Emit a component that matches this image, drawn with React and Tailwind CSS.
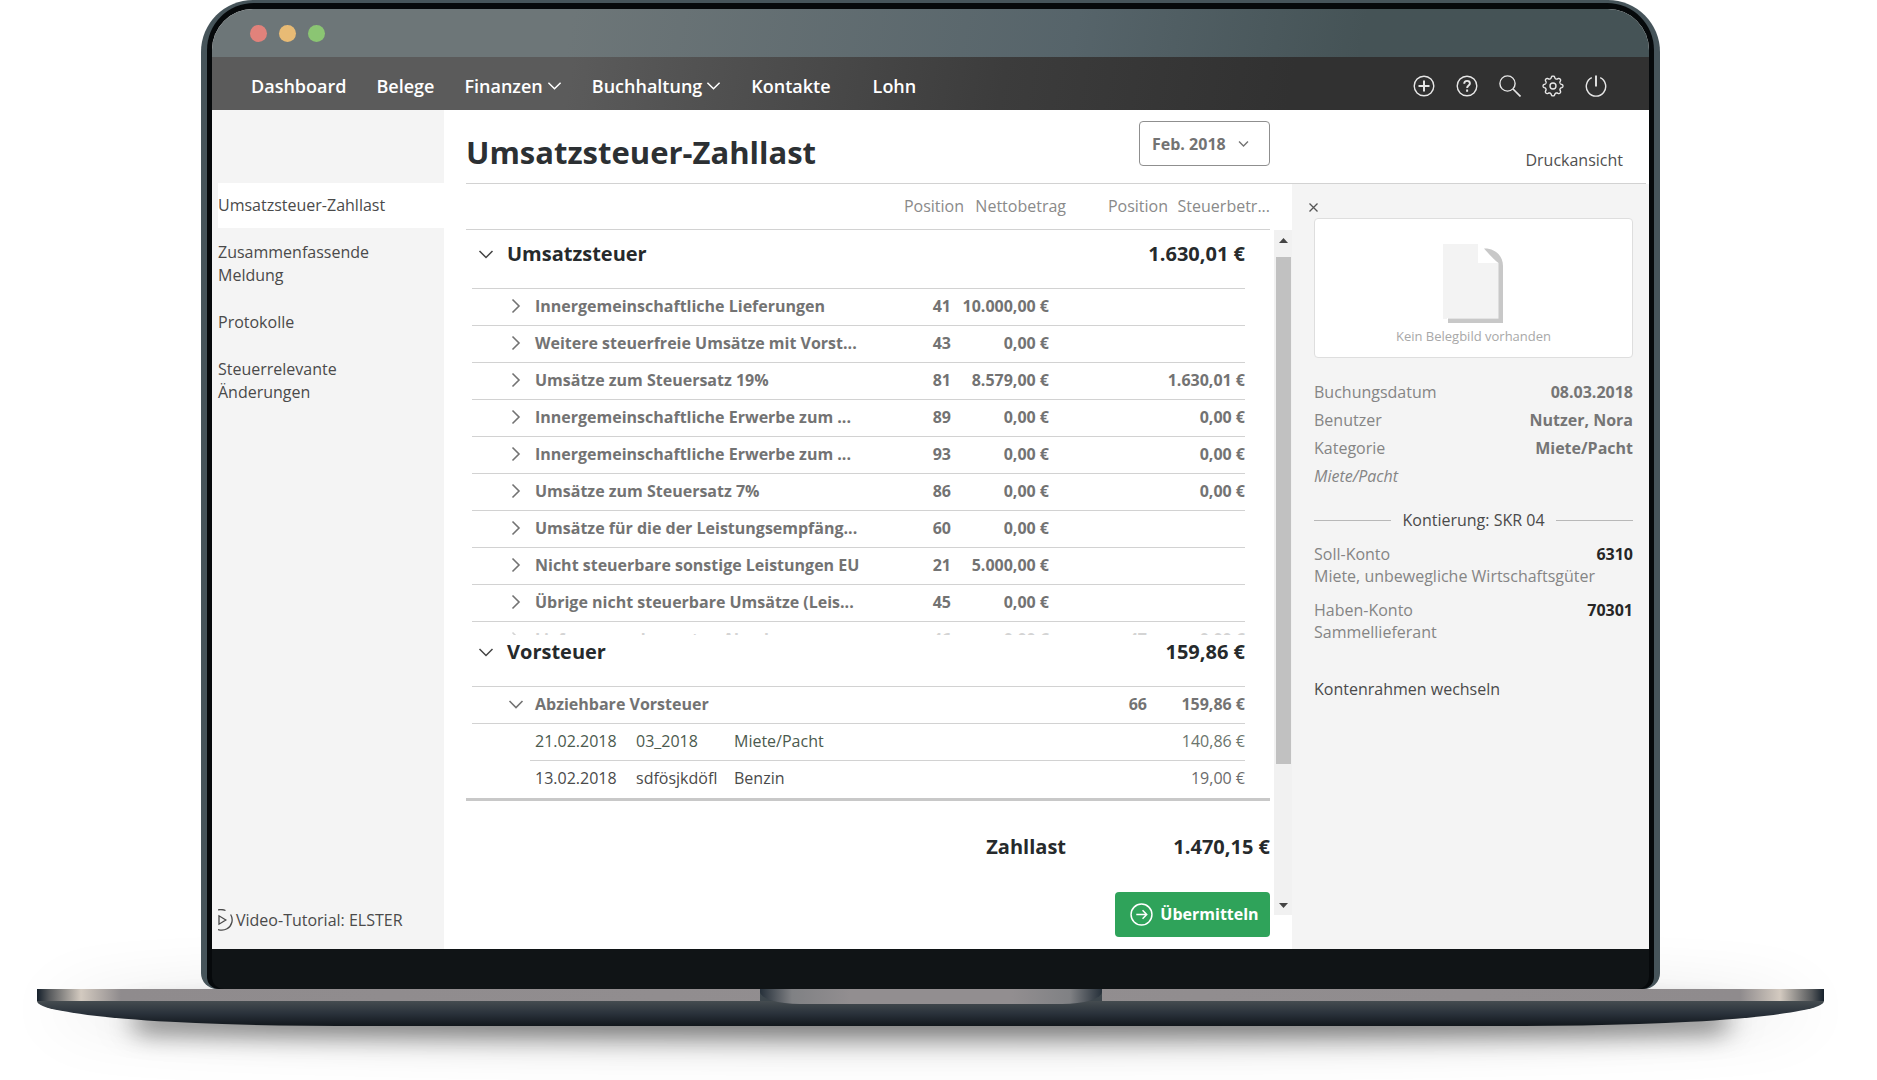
import React from 'react';

const CHEVRONS = {
  down: 'M1.5 5l6.5 6.5L14.5 5',
  right: 'M4.5 1.5L11 8l-6.500 6.500',
};

function Chevron({ dir = 'down', className = '', stroke = 1.5 }) {
  return (
    <svg viewBox="0 0 16 16" className={className} fill="none" stroke="currentColor" strokeWidth={stroke} aria-hidden="true">
      <path d={CHEVRONS[dir]} />
    </svg>
  );
}

/* Outline of the eight-lobed gear, as a closed wave round the centre. */
const GEAR = (() => {
  const points = [];
  for (let i = 0; i < 160; i += 1) {
    const a = (i / 160) * Math.PI * 2;
    const wave = Math.tanh(1.6 * Math.cos(8 * a));
    const r = 8.8 + 1.2 * wave;
    points.push(`${(11 + r * Math.sin(a)).toFixed(2)} ${(11 - r * Math.cos(a)).toFixed(2)}`);
  }
  return `M${points.join('L')}Z`;
})();

function NavIcon({ label, children }) {
  return (
    <button type="button" aria-label={label} className="size-[22px] text-[#e6e6e6]">
      <svg viewBox="0 0 22 22" className="size-full" fill="none" stroke="currentColor" strokeWidth="1.4">
        {children}
      </svg>
    </button>
  );
}

function NavLink({ children, menu, className = '' }) {
  return (
    <a href="#" className={`flex items-center gap-1 ${className}`}>
      {children}
      {menu && <Chevron className="size-[15px]" stroke={1.6} />}
    </a>
  );
}

function TitleBar() {
  return (
    <div className="flex h-12 items-center gap-3 bg-linear-100 from-[#6d7678] from-25% via-[#56646a] via-60% to-[#455356] to-80% pl-[38px]">
      <span className="size-[17px] rounded-full bg-[#e1827b]" />
      <span className="size-[17px] rounded-full bg-[#e8bb75]" />
      <span className="size-[17px] rounded-full bg-[#8bc573]" />
    </div>
  );
}

function NavBar() {
  return (
    <header className="flex h-[53px] items-center justify-between bg-linear-100 from-[#5b5b5b] from-25% via-[#3c3c3c] via-55% to-[#313131] to-75% pt-1 pr-[42px] pl-[39px] text-lg font-semibold text-white">
      <nav className="flex items-center gap-[30px]">
        <NavLink>Dashboard</NavLink>
        <NavLink>Belege</NavLink>
        <NavLink menu>Finanzen</NavLink>
        <NavLink menu>Buchhaltung</NavLink>
        <NavLink>Kontakte</NavLink>
        <NavLink className="ml-3">Lohn</NavLink>
      </nav>
      <div className="flex items-center gap-[21px]">
        <NavIcon label="Neu">
          <circle cx="11" cy="11" r="9.8" />
          <path d="M11 5.500v11M5.500 11h11" strokeWidth="2" />
        </NavIcon>
        <NavIcon label="Hilfe">
          <circle cx="11" cy="11" r="9.800" />
          <path d="M8.200 8.800c0-1.800 1.200-2.900 2.900-2.900s2.800 1 2.800 2.500c0 2-2.800 2.200-2.800 4.500" strokeWidth="1.900" />
          <path d="M11.100 14.600v2.100" strokeWidth="2" />
        </NavIcon>
        <NavIcon label="Suche">
          <circle cx="8.500" cy="8.500" r="7.600" />
          <path d="M14 14l7.500 7.500" strokeWidth="1.700" />
        </NavIcon>
        <NavIcon label="Einstellungen">
          <path d={GEAR} />
          <circle cx="11" cy="11" r="3" />
        </NavIcon>
        <NavIcon label="Abmelden">
          <path d="M6.800 2.700a9.700 9.700 0 1 0 8.400 0" />
          <path d="M11 .5v11" strokeWidth="1.900" />
        </NavIcon>
      </div>
    </header>
  );
}

function Sidebar() {
  const item = 'block py-3 pr-14';
  return (
    <aside className="flex w-[232px] shrink-0 flex-col justify-between bg-[#f4f4f4] pt-[73px] pb-[17px] pl-[6px] leading-[23px] text-[#4a4a4a]">
      <nav>
        <a href="#" aria-current="page" className="block bg-white py-[11px]">Umsatzsteuer-Zahllast</a>
        <a href="#" className="block pt-[13px] pr-14 pb-3">Zusammenfassende Meldung</a>
        <a href="#" className={item}>Protokolle</a>
        <a href="#" className={item}>Steuerrelevante Änderungen</a>
      </nav>
      <a href="#" className="flex items-center gap-[3px]">
        <svg viewBox="0 0 15 22" className="h-[22px] w-[15px]" fill="none" stroke="currentColor" strokeWidth="1.3" aria-hidden="true">
          <path d="M0 .9C2.500.300 5 .500 7.500 1.500M12.600 5.500C15.800 10.500 13.800 17 9 19.800 6 21.500 3 21.500 0 20.500" />
          <path d="M1 6.800v8.400l6.800-4.200z" />
        </svg>
        Video-Tutorial: ELSTER
      </a>
    </aside>
  );
}

function Columns() {
  return (
    <colgroup>
      <col className="w-[58px]" />
      <col />
      <col className="w-[98px]" />
      <col className="w-[98px]" />
      <col className="w-[98px]" />
      <col className="w-[98px]" />
    </colgroup>
  );
}

const SALES = [
  ['Innergemeinschaftliche Lieferungen', '41', '10.000,00 €', '', ''],
  ['Weitere steuerfreie Umsätze mit Vorst...', '43', '0,00 €', '', ''],
  ['Umsätze zum Steuersatz 19%', '81', '8.579,00 €', '', '1.630,01 €'],
  ['Innergemeinschaftliche Erwerbe zum ...', '89', '0,00 €', '', '0,00 €'],
  ['Innergemeinschaftliche Erwerbe zum ...', '93', '0,00 €', '', '0,00 €'],
  ['Umsätze zum Steuersatz 7%', '86', '0,00 €', '', '0,00 €'],
  ['Umsätze für die der Leistungsempfäng...', '60', '0,00 €', '', ''],
  ['Nicht steuerbare sonstige Leistungen EU', '21', '5.000,00 €', '', ''],
  ['Übrige nicht steuerbare Umsätze (Leis...', '45', '0,00 €', '', ''],
  ['Lieferungen des ersten Abnehmers', '46', '0,00 €', '47', '0,00 €'],
];

const RECEIPTS = [
  ['21.02.2018', '03_2018', 'Miete/Pacht', '140,86 €', 'text-[#4b5a4e]'],
  ['13.02.2018', 'sdfösjkdöfl', 'Benzin', '19,00 €', 'text-[#4a4a4a]'],
];

function SectionHeading({ title, amount, className }) {
  return (
    <div className={`flex justify-between border-b border-[#d2d2d2] pl-[6px] text-xl leading-7 font-bold text-[#262a2c] ${className}`}>
      <h2>
        <button type="button" aria-expanded="true" className="flex items-center gap-[13px]">
          <Chevron className="size-4 text-[#444]" />
          {title}
        </button>
      </h2>
      <span>{amount}</span>
    </div>
  );
}

function GroupRow({ row, open, faded }) {
  const [name, ...values] = row;
  return (
    <tr className={`h-[37px] border-b border-[#d2d2d2] font-bold ${faded ? 'text-[#d4d4d4]' : 'text-[#737373]'}`}>
      <td className="pb-[2px] pl-9 align-middle">
        <button type="button" aria-label={name} aria-expanded={!!open} className="flex">
          <Chevron dir={open ? 'down' : 'right'} className="size-4" stroke={1.6} />
        </button>
      </td>
      <td className="pb-[2px] pl-[5px] whitespace-nowrap">{name}</td>
      {values.map((v, i) => (
        <td key={i} className="pb-[2px] text-right whitespace-nowrap">{v}</td>
      ))}
    </tr>
  );
}

function Report() {
  return (
    <section className="min-w-0 flex-1 pb-3 pl-[22px]">
      <table className="w-full table-fixed border-b border-[#d2d2d2] text-right text-[#8a8a8a]">
        <colgroup>
          <col />
          <col className="w-[102px]" />
          <col className="w-[102px]" />
          <col className="w-[102px]" />
          <col className="w-[102px]" />
        </colgroup>
        <thead>
          <tr className="h-[45px]">
            <td />
            <th className="font-normal">Position</th>
            <th className="font-normal">Nettobetrag</th>
            <th className="font-normal">Position</th>
            <th className="font-normal whitespace-nowrap">Steuerbetr...</th>
          </tr>
        </thead>
      </table>

      <div className="h-[405px] overflow-hidden pr-[25px] pl-[6px]">
        <SectionHeading title="Umsatzsteuer" amount="1.630,01 €" className="pt-[10px] pb-5" />
        <table className="w-full table-fixed">
          <Columns />
          <tbody>
            {SALES.map((row, i) => <GroupRow key={row[1]} row={row} faded={i === SALES.length - 1} />)}
          </tbody>
        </table>
      </div>

      <div className="pr-[25px] pl-[6px]">
        <SectionHeading title="Vorsteuer" amount="159,86 €" className="pt-[3px] pb-5" />
        <table className="w-full table-fixed">
          <Columns />
          <tbody>
            <GroupRow open row={['Abziehbare Vorsteuer', '', '', '66', '159,86 €']} />
            {RECEIPTS.map(([date, number, category, amount, tone], i) => (
              <tr key={date} className={`h-[37px] ${tone}`}>
                <td />
                <td colSpan={4} className={i === 0 ? 'border-b border-[#d2d2d2] pb-[2px] pl-[5px]' : 'pb-[2px] pl-[5px]'}>
                  <div className="flex">
                    <span className="w-[101px]">{date}</span>
                    <span className="w-[98px]">{number}</span>
                    <span>{category}</span>
                  </div>
                </td>
                <td className={i === 0 ? 'border-b border-[#d2d2d2] pb-[2px] text-right text-[#6b756d]' : 'pb-[2px] text-right text-[#6b6b6b]'}>{amount}</td>
              </tr>
            ))}
          </tbody>
        </table>
      </div>

      <div className="grid grid-cols-[1fr_204px] border-t-3 border-[#c8c8c8] pt-8 text-right text-xl leading-7 font-bold text-[#262a2c]">
        <span>Zahllast</span>
        <span>1.470,15 €</span>
      </div>
      <div className="mt-[31px] flex justify-end">
        <button type="button" className="flex h-[45px] w-[155px] items-center justify-center gap-[7px] rounded-[4px] bg-[#2fa35a] pl-1 font-bold text-white">
          <svg viewBox="0 0 22 22" className="size-[23px]" fill="none" stroke="currentColor" strokeWidth="1.400" aria-hidden="true">
            <circle cx="11" cy="11" r="10" />
            <path d="M6 11h10M12 7l4 4-4 4" />
          </svg>
          Übermitteln
        </button>
      </div>
    </section>
  );
}

function ScrollTrack() {
  return (
    <div className="ml-1 flex w-[18px] shrink-0 flex-col pt-[46px] pb-[34px]" aria-hidden="true">
      <div className="flex flex-1 flex-col items-center bg-[#f1f1f1]">
        <svg viewBox="0 0 9 5" className="mt-2 mb-[14px] h-[5px] w-[9px] shrink-0 fill-[#444]"><path d="M0 5L4.500 0 9 5z" /></svg>
        <div className="h-[74%] w-[15px] bg-[#c1c1c1]" />
        <svg viewBox="0 0 9 5" className="mt-auto mb-[7px] h-[5px] w-[9px] shrink-0 fill-[#444]"><path d="M0 0h9L4.500 5z" /></svg>
      </div>
    </div>
  );
}

function Account({ label, number, text, className }) {
  return (
    <div className={`leading-[22px] ${className}`}>
      <div className="flex justify-between">
        <span>{label}</span>
        <span className="font-bold text-[#262626]">{number}</span>
      </div>
      <p>{text}</p>
    </div>
  );
}

function Details() {
  const facts = [
    ['Buchungsdatum', '08.03.2018'],
    ['Benutzer', 'Nutzer, Nora'],
    ['Kategorie', 'Miete/Pacht'],
  ];
  return (
    <aside className="w-[357px] shrink-0 bg-[#f4f4f4] pt-[18px] pr-4 pl-[22px] text-[#858585]">
      <button type="button" aria-label="Schließen" className="-ml-[6px] flex size-[11px] text-[#555]">
        <svg viewBox="0 0 11 11" className="size-full" fill="none" stroke="currentColor" strokeWidth="1.300"><path d="M1.500 1.500l8 8M9.500 1.500l-8 8" /></svg>
      </button>
      <figure className="mt-[5px] flex h-[140px] flex-col items-center rounded-[4px] border border-[#dedede] bg-white pt-[25px]">
        <svg viewBox="0 0 62 79" className="h-[79px] w-[62px]" aria-hidden="true">
          <path d="M0 0h35v19h21v55H4v1H0z" fill="#f3f3f3" />
          <path d="M41 4.500C50 4 60 10 60 22v57H5v-4.500h50.500V19C51 16 45 9 41 4.500z" fill="#c8c8c8" />
        </svg>
        <figcaption className="mt-[3px] text-[13px] leading-5 text-[#a8a8a8]">Kein Belegbild vorhanden</figcaption>
      </figure>
      <dl className="mt-5 leading-7">
        {facts.map(([k, v]) => (
          <div key={k} className="flex justify-between">
            <dt>{k}</dt>
            <dd className="font-bold text-[#757575]">{v}</dd>
          </div>
        ))}
      </dl>
      <p className="leading-7 italic">Miete/Pacht</p>
      <h3 className="mt-[18px] flex items-center gap-[11px] leading-6 text-[#4a4a4a] before:h-px before:flex-1 before:bg-[#b8b8b8] after:h-px after:flex-1 after:bg-[#b8b8b8]">
        Kontierung: SKR 04
      </h3>
      <Account className="mt-[11px]" label="Soll-Konto" number="6310" text="Miete, unbewegliche Wirtschaftsgüter" />
      <Account className="mt-3" label="Haben-Konto" number="70301" text="Sammellieferant" />
      <a href="#" className="mt-[34px] block leading-6 text-[#4a4a4a]">Kontenrahmen wechseln</a>
    </aside>
  );
}

function PageHeader() {
  return (
    <div className="mr-[3px] ml-[22px] flex h-[74px] border-b border-[#d2d2d2]">
      <h1 className="flex-1 pt-[22px] text-[31px] leading-10 font-bold text-[#2c3033]">Umsatzsteuer-Zahllast</h1>
      <div className="relative mt-[11px] h-[45px] w-[131px] text-[#737373]">
        <select aria-label="Zeitraum" className="size-full appearance-none rounded-[4px] border border-[#8f8f8f] bg-white pl-3 font-bold">
          <option>Feb. 2018</option>
        </select>
        <Chevron className="pointer-events-none absolute top-[17px] right-[21px] size-[11px]" stroke={2} />
      </div>
      <div className="w-[376px] pt-[38px] pr-[23px] text-right leading-6 text-[#4f4f4f]">
        <a href="#">Druckansicht</a>
      </div>
    </div>
  );
}

function Base() {
  return (
    <div className="relative mx-[37px]">
      <div className="absolute inset-x-5 top-0 h-6 rounded-[50%] shadow-[0_8px_64px_12px_rgba(0,0,0,0.14)]" />
      <div className="absolute inset-x-20 top-4 h-8 rounded-[50%] bg-black/30 blur-lg" />
      <div className="absolute inset-x-24 top-5 h-6 rounded-2xl bg-black/40 blur-md" />
      <div className="relative flex h-3 justify-center bg-[linear-gradient(90deg,#15202b_0,#55585b_12px,#d3cac0_44px,#8f8b8d_84px,#928e90_50%,#8f8b8d_calc(100%-84px),#d3cac0_calc(100%-44px),#55585b_calc(100%-12px),#15202b_100%)]">
        <div className="w-[342px] bg-[#3d464c]" />
      </div>
      <div className="relative flex h-[25px] justify-center bg-linear-to-b from-[#454c50] via-[#2a323b] to-[#12171c] [border-bottom-left-radius:300px_25px] [border-bottom-right-radius:300px_25px]">
        <div className="-mt-3 h-[15px] w-[342px] bg-[linear-gradient(90deg,#26303a_0,#808184_32px,#928e90_90px,#928e90_calc(100%-90px),#808184_calc(100%-32px),#26303a_100%)] [border-bottom-left-radius:40px_12px] [border-bottom-right-radius:40px_12px]" />
      </div>
    </div>
  );
}

export default function App() {
  return (
    <div className="min-h-screen overflow-hidden bg-white pr-4 font-['Open_Sans',sans-serif] text-base">
      <div className="relative z-10 mx-[201px] rounded-t-[52px] rounded-b-[16px] bg-[#46545a] px-[6px] pt-[3px]">
        <div className="rounded-t-[47px] rounded-b-[12px] bg-[#06090b] px-[5px] pt-[6px]">
          <div className="overflow-hidden rounded-t-[41px] bg-white">
            <TitleBar />
            <NavBar />
            <div className="flex">
              <Sidebar />
              <main className="min-w-0 flex-1">
                <PageHeader />
                <div className="flex">
                  <Report />
                  <ScrollTrack />
                  <Details />
                </div>
              </main>
            </div>
          </div>
          <div className="h-10 rounded-b-[12px] bg-[#101416]" />
        </div>
      </div>
      <Base />
    </div>
  );
}
